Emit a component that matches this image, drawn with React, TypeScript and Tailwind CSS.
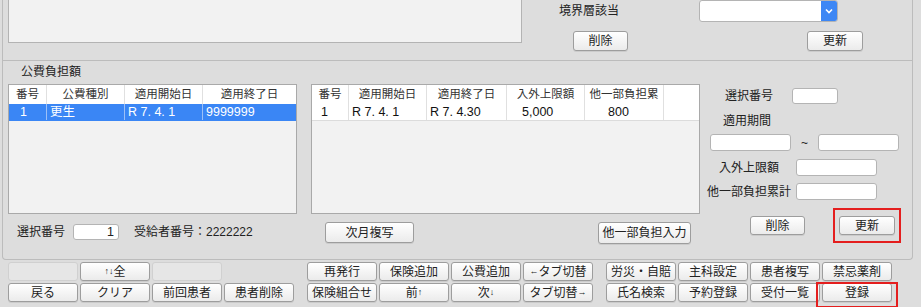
import React from "react";

const font = { fontFamily: '"Liberation Sans", "Noto Sans CJK JP", sans-serif' };

const btn =
  "flex items-center justify-center whitespace-nowrap rounded-[3px] border border-[#9d9d9d] bg-linear-to-b from-white to-[#ebebeb] text-[12px] leading-none text-[#222] shadow-[0_1px_0_rgba(0,0,0,0.08)]";
const btnOff = "rounded-[3px] border border-[#d0d0d0] bg-[#e6e6e6]";
const input = "rounded-[3px] border border-[#b4b4b4] bg-white";

type Col = { w: string; label: string; pad: string };

const leftCols: Col[] = [
  { w: "w-[38px]", label: "番号", pad: "pl-[11px]" },
  { w: "w-[78px]", label: "公費種別", pad: "pl-[3px]" },
  { w: "w-[78px]", label: "適用開始日", pad: "pl-[3px]" },
  { w: "flex-1", label: "適用終了日", pad: "pl-[3px]" },
];

const rightCols: Col[] = [
  { w: "w-[37px]", label: "番号", pad: "pl-[9px]" },
  { w: "w-[78px]", label: "適用開始日", pad: "pl-[3px]" },
  { w: "w-[80px]", label: "適用終了日", pad: "pl-[3px]" },
  { w: "w-[78px]", label: "入外上限額", pad: "pl-[15px]" },
  { w: "w-[79px]", label: "他一部負担累", pad: "pl-[23px]" },
  { w: "flex-1", label: "", pad: "" },
];

function Table({
  cols,
  row,
  selected,
  width,
}: {
  cols: Col[];
  row: string[];
  selected?: boolean;
  width: string;
}) {
  return (
    <div className={`${width} h-[130px] border border-[#a9a9a9] bg-[#f2f2f2]`}>
      <div className="flex h-[19px] bg-white">
        {cols.map((c, i) => (
          <div
            key={i}
            className={`${c.w} flex items-center justify-center border-r border-[#e0e0e0] text-[11.5px] text-[#333] last:border-r-0`}
          >
            {c.label}
          </div>
        ))}
      </div>
      <div
        className={`flex h-[17px] border-b ${
          selected ? "border-[#3a86f5] bg-[#3a86f5] text-white" : "border-[#dcdcdc] bg-white text-[#111]"
        }`}
      >
        {cols.map((c, i) => (
          <div
            key={i}
            className={`${c.w} ${c.pad} flex items-center border-r text-[12.5px] leading-none last:border-r-0 ${
              selected ? "border-[#9cc0f7]" : "border-[#e0e0e0]"
            }`}
          >
            {row[i] ?? ""}
          </div>
        ))}
      </div>
    </div>
  );
}

function Small({ children }: { children: React.ReactNode }) {
  return <span className="text-[9px]">{children}</span>;
}

export default function App() {
  const g1r1: (React.ReactNode | null)[] = [null, <>
    <Small>↑↓</Small>全
  </>, null];
  return (
    <div className="h-[307px] w-[921px] overflow-hidden bg-[#dddddd] text-[#222]" style={font}>
      {/* upper panel */}
      <div className="ml-[2px] flex h-[61px] w-[911px] border-x border-b border-[#bcbcbc]">
        <div className="ml-[5px] h-[43px] w-[514px] border-x border-b border-[#b3b3b3] bg-[#f2f2f2]" />
        <div className="flex flex-col">
          <div className="flex h-[22px] items-center">
            <span className="ml-[37px] w-[140px] text-[12px]">境界層該当</span>
            <div className="flex h-[22px] w-[139px] overflow-hidden rounded-[3px] border border-[#b4b4b4] bg-white">
              <div className="flex-1" />
              <div className="flex w-[16px] items-center justify-center bg-[#3d87f5]">
                <svg width="8" height="6" viewBox="0 0 8 6">
                  <path d="M1 1.5 L4 4.5 L7 1.5" stroke="white" strokeWidth="1.6" fill="none" />
                </svg>
              </div>
            </div>
          </div>
          <div className="mt-[9px] flex">
            <button className={`${btn} ml-[51px] h-[20px] w-[55px]`}>削除</button>
            <button className={`${btn} ml-[179px] h-[20px] w-[56px]`}>更新</button>
          </div>
        </div>
      </div>

      {/* 公費負担額 panel */}
      <div className="ml-[2px] h-[199px] w-[911px] rounded-b-[4px] border-x border-b border-[#bcbcbc]">
        <div className="pl-[18px] pt-[3px] text-[12px] leading-[16px]">公費負担額</div>
        <div className="mt-[4px] flex">
          <div className="ml-[5px] flex flex-col">
            <Table cols={leftCols} row={["1", "更生", "R 7. 4. 1", "9999999"]} selected width="w-[289px]" />
            <div className="mt-[9px] flex items-center text-[12px]">
              <span className="ml-[9px] w-[56px]">選択番号</span>
              <div className={`${input} flex h-[16px] w-[46px] items-center justify-end pr-[4px] text-[12.5px]`}>1</div>
              <span className="ml-[15px]">受給者番号：2222222</span>
            </div>
          </div>

          <div className="ml-[14px] flex w-[389px] flex-col">
            <Table
              cols={rightCols}
              row={["1", "R 7. 4. 1", "R 7. 4.30", "5,000", "800"]}
              width="w-[389px]"
            />
            <div className="mt-[8px] flex items-start">
              <button className={`${btn} ml-[14px] h-[21px] w-[89px]`}>次月複写</button>
              <button className={`${btn} ml-auto mr-[9px] h-[22px] w-[93px]`}>他一部負担入力</button>
            </div>
          </div>

          <div className="flex flex-col whitespace-nowrap text-[12px]">
            <div className="mt-[4px] flex h-[16px] items-center">
              <span className="ml-[25px] w-[67px]">選択番号</span>
              <div className={`${input} h-[16px] w-[46px]`} />
            </div>
            <div className="ml-[23px] mt-[9px] h-[16px] leading-[16px]">適用期間</div>
            <div className="mt-[5px] flex h-[17px] items-center">
              <div className={`${input} ml-[10px] h-[17px] w-[81px]`} />
              <span className="w-[27px] text-center">~</span>
              <div className={`${input} h-[17px] w-[81px]`} />
            </div>
            <div className="mt-[8px] flex h-[17px] items-center">
              <span className="ml-[8px] flex w-[82px] justify-center">入外上限額</span>
              <div className={`${input} ml-[6px] h-[17px] w-[81px]`} />
            </div>
            <div className="mt-[7px] flex h-[17px] items-center">
              <span className="ml-[8px] flex w-[82px] justify-center">他一部負担累計</span>
              <div className={`${input} ml-[6px] h-[17px] w-[81px]`} />
            </div>
            <div className="mt-[8px] flex h-[35px] items-center">
              <button className={`${btn} ml-[50px] h-[19px] w-[55px]`}>削除</button>
              <div className="ml-[28px] flex h-[35px] w-[68px] items-center justify-center border-2 border-[#e41e1e]">
                <button className={`${btn} h-[19px] w-[56px]`}>更新</button>
              </div>
            </div>
          </div>
        </div>
      </div>

      {/* function keys */}
      <div className="mt-[2px] flex">
        <div className="ml-[8px] grid w-[286px] grid-cols-4 gap-[2px]">
          {g1r1.map((c, i) =>
            c ? (
              <button key={i} className={`${btn} h-[19px]`}>
                {c}
              </button>
            ) : (
              <div key={i} className={`${btnOff} h-[19px]`} />
            )
          )}
          <div />
          {["戻る", "クリア", "前回患者", "患者削除"].map((t) => (
            <button key={t} className={`${btn} h-[19px]`}>
              {t}
            </button>
          ))}
        </div>
        <div className="ml-[13px] grid w-[286px] grid-cols-4 gap-[2px]">
          {[
            "再発行",
            "保険追加",
            "公費追加",
            <>
              <Small>←</Small>タブ切替
            </>,
            "保険組合せ",
            <>
              前<Small>↑</Small>
            </>,
            <>
              次<Small>↓</Small>
            </>,
            <>
              タブ切替<Small>→</Small>
            </>,
          ].map((t, i) => (
            <button key={i} className={`${btn} h-[19px]`}>
              {t}
            </button>
          ))}
        </div>
        <div className="ml-[13px] grid w-[286px] grid-cols-4 gap-[2px]">
          {["労災・自賠", "主科設定", "患者複写", "禁忌薬剤", "氏名検索", "予約登録", "受付一覧"].map((t) => (
            <button key={t} className={`${btn} h-[19px]`}>
              {t}
            </button>
          ))}
          <div className="relative">
            <button className={`${btn} h-[19px] w-full`}>登録</button>
            <span className="absolute -inset-x-[6px] -top-[1px] -bottom-[6px] border-2 border-[#e41e1e]" />
          </div>
        </div>
      </div>
    </div>
  );
}
